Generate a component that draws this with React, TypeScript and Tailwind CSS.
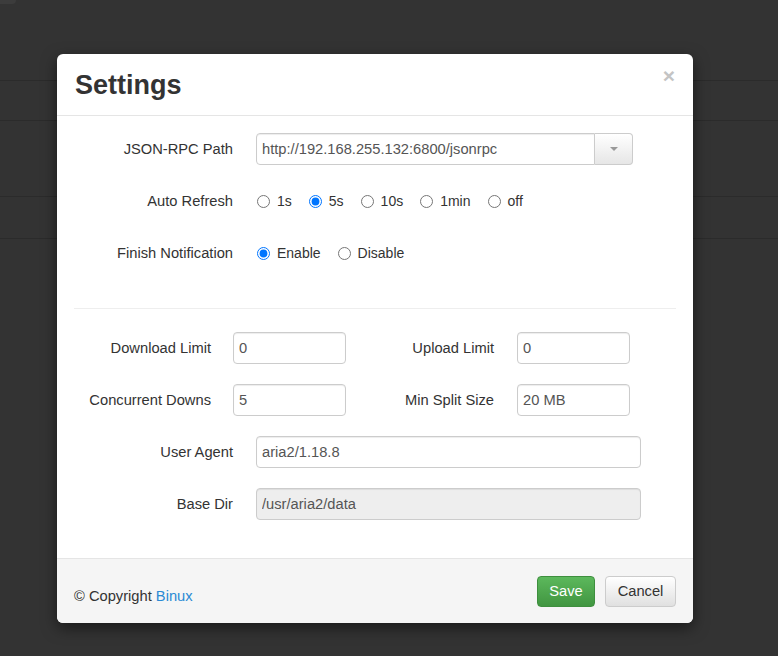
import React from "react";

function Radio({ label, checked }: { label: string; checked?: boolean }) {
  return (
    <label className="flex items-center gap-[7px] text-[14px] text-[#333]">
      <input type="radio" defaultChecked={checked} className="m-0 w-[13px] h-[13px]" />
      <span>{label}</span>
    </label>
  );
}

const inputCls =
  "h-[32px] border border-[#ccc] rounded-[4px] px-[5px] text-[14.7px] text-[#555] bg-white shadow-[inset_0_1px_1px_rgba(0,0,0,0.075)] outline-none";

const labelCls = "text-right text-[14.7px] text-[#333]";

export default function App() {
  return (
    <div className="relative w-[778px] h-[656px] overflow-hidden bg-[#333] font-['Liberation_Sans',Arial,sans-serif]">
      {/* background page */}
      <div className="w-[16px] h-[4px] bg-[#3c3c3c] rounded-br-[4px]" />
      <div className="h-[76px]" />
      <div className="h-px bg-[#2b2b2b]" />
      <div className="h-[39px]" />
      <div className="h-px bg-[#2b2b2b]" />
      <div className="h-[75px]" />
      <div className="h-px bg-[#2b2b2b]" />
      <div className="h-[41px]" />
      <div className="h-px bg-[#2b2b2b]" />

      {/* modal */}
      <div className="absolute left-[57px] top-[54px] w-[636px] h-[569px] bg-white rounded-[6px] shadow-[0_5px_15px_rgba(0,0,0,0.5)] flex flex-col overflow-hidden">
        <div className="relative h-[62px] border-b border-[#e5e5e5] flex items-center px-[18px]">
          <h4 className="mt-[2px] text-[27px] font-bold text-[#333] leading-none">Settings</h4>
          <span className="absolute right-[18px] top-[11px] text-[21px] font-bold text-[#c4c4c4] leading-none">×</span>
        </div>

        <div className="flex-1 px-[15px] pt-[17px]">
          <div className="flex flex-col gap-[20px]">
            <div className="flex items-center h-[32px]">
              <div className={labelCls + " w-[161px]"}>JSON-RPC Path</div>
              <div className="ml-[23px] flex w-[377px]">
                <input
                  readOnly
                  value="http://192.168.255.132:6800/jsonrpc"
                  className={inputCls + " flex-1 min-w-0 rounded-r-none"}
                />
                <div className="w-[38px] h-[32px] border border-l-0 border-[#ccc] rounded-r-[4px] bg-gradient-to-b from-white to-[#e6e6e6] flex items-center justify-center">
                  <div className="w-0 h-0 border-x-[4px] border-x-transparent border-t-[4px] border-t-[#999]" />
                </div>
              </div>
            </div>

            <div className="flex items-center h-[32px]">
              <div className={labelCls + " w-[161px]"}>Auto Refresh</div>
              <div className="ml-[24px] flex items-center gap-[17px]">
                <Radio label="1s" />
                <Radio label="5s" checked />
                <Radio label="10s" />
                <Radio label="1min" />
                <Radio label="off" />
              </div>
            </div>

            <div className="flex items-center h-[32px]">
              <div className={labelCls + " w-[161px]"}>Finish Notification</div>
              <div className="ml-[24px] flex items-center gap-[17px]">
                <Radio label="Enable" checked />
                <Radio label="Disable" />
              </div>
            </div>
          </div>

          <div className="mt-[39px] mx-[2px] h-px bg-[#eee]" />

          <div className="mt-[23px] flex flex-col gap-[20px]">
            <div className="flex items-center h-[32px]">
              <div className={labelCls + " w-[139px]"}>Download Limit</div>
              <input readOnly value="0" className={inputCls + " ml-[22px] w-[113px]"} />
              <div className={labelCls + " w-[148px]"}>Upload Limit</div>
              <input readOnly value="0" className={inputCls + " ml-[23px] w-[113px]"} />
            </div>
            <div className="flex items-center h-[32px]">
              <div className={labelCls + " w-[139px]"}>Concurrent Downs</div>
              <input readOnly value="5" className={inputCls + " ml-[22px] w-[113px]"} />
              <div className={labelCls + " w-[148px]"}>Min Split Size</div>
              <input readOnly value="20 MB" className={inputCls + " ml-[23px] w-[113px]"} />
            </div>
            <div className="flex items-center h-[32px]">
              <div className={labelCls + " w-[161px]"}>User Agent</div>
              <input readOnly value="aria2/1.18.8" className={inputCls + " ml-[23px] w-[385px]"} />
            </div>
            <div className="flex items-center h-[32px]">
              <div className={labelCls + " w-[161px]"}>Base Dir</div>
              <input
                disabled
                value="/usr/aria2/data"
                className={inputCls + " ml-[23px] w-[385px] !bg-[#eee] cursor-not-allowed"}
              />
            </div>
          </div>
        </div>

        <div className="h-[65px] border-t border-[#e5e5e5] bg-[#f5f5f5] flex items-center justify-between pl-[17px] pr-[17px]">
          <div className="mt-[10px] text-[14.7px] text-[#333]">
            © Copyright <span className="text-[#2a8ad4]">Binux</span>
          </div>
          <div className="flex items-center gap-[10px]">
            <button className="h-[31px] w-[58px] rounded-[4px] border border-[#3e8f3e] bg-gradient-to-b from-[#5cb85c] to-[#419641] text-white text-[14.7px]">
              Save
            </button>
            <button className="h-[31px] w-[71px] rounded-[4px] border border-[#ccc] bg-gradient-to-b from-white to-[#e0e0e0] text-[#333] text-[14.7px]">
              Cancel
            </button>
          </div>
        </div>
      </div>
    </div>
  );
}
